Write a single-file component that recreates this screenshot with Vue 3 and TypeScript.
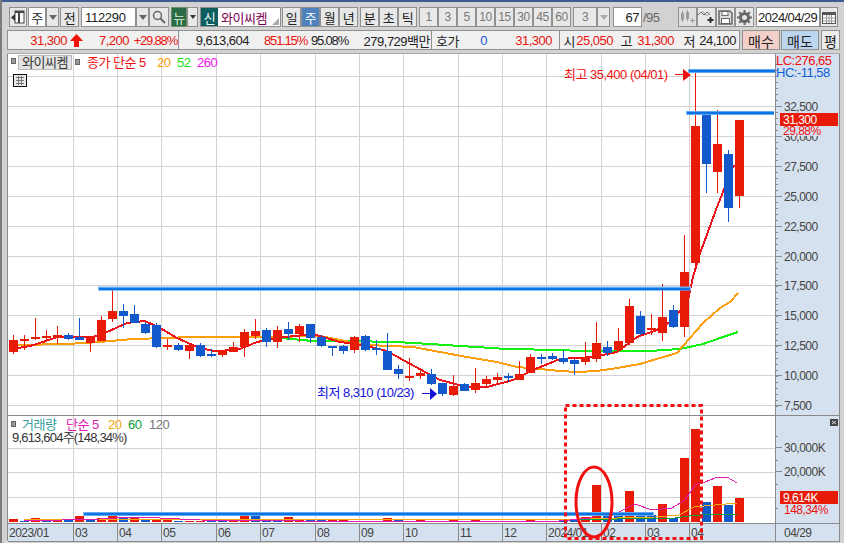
<script setup lang="ts">
type Candle = [number, number, number, number, 'r' | 'b']

// wick top, body top, body bottom, wick bottom (pixels in the chart)
const candles: Candle[] = [
  [335, 340, 352, 354, 'r'], [335, 339, 341, 350, 'r'], [318, 337, 339, 340, 'r'], [330, 336, 338, 342, 'r'],
  [326, 335, 338, 344, 'r'], [333, 335, 339, 340, 'b'], [318, 337, 340, 340, 'b'], [336, 337, 343, 352, 'r'],
  [316, 320, 341, 341, 'r'], [289, 311, 319, 322, 'r'], [304, 311, 316, 328, 'b'], [305, 314, 323, 323, 'b'],
  [322, 324, 333, 334, 'b'], [323, 325, 347, 348, 'b'], [339, 345, 347, 350, 'r'], [343, 345, 350, 351, 'b'],
  [344, 345, 351, 359, 'r'], [343, 345, 356, 357, 'b'], [349, 354, 356, 357, 'b'], [350, 350, 355, 357, 'r'],
  [342, 347, 352, 352, 'r'], [329, 332, 347, 357, 'r'], [319, 331, 336, 339, 'r'], [328, 330, 342, 347, 'b'],
  [326, 330, 342, 348, 'r'], [322, 329, 334, 340, 'b'], [324, 326, 334, 342, 'r'], [324, 324, 338, 343, 'b'],
  [335, 337, 346, 347, 'b'], [346, 346, 348, 356, 'b'], [345, 346, 351, 354, 'b'], [336, 337, 350, 353, 'r'],
  [335, 336, 350, 351, 'b'], [340, 348, 350, 355, 'b'], [333, 351, 370, 370, 'b'], [365, 369, 374, 379, 'b'],
  [358, 376, 378, 381, 'r'], [369, 373, 376, 379, 'r'], [369, 374, 384, 385, 'b'], [383, 383, 394, 396, 'b'],
  [375, 386, 395, 396, 'r'], [383, 384, 391, 391, 'b'], [368, 383, 390, 393, 'r'], [376, 379, 384, 388, 'r'],
  [373, 377, 380, 385, 'r'], [373, 376, 378, 382, 'b'], [361, 374, 380, 380, 'r'], [354, 357, 373, 373, 'r'],
  [354, 357, 359, 364, 'b'], [353, 356, 359, 360, 'b'], [350, 358, 362, 364, 'b'], [359, 360, 364, 375, 'b'],
  [342, 358, 362, 365, 'r'], [322, 343, 359, 362, 'r'], [341, 347, 353, 356, 'b'], [328, 341, 350, 352, 'r'],
  [299, 306, 343, 345, 'r'], [311, 316, 334, 335, 'b'], [314, 328, 330, 335, 'r'], [284, 317, 333, 341, 'r'],
  [305, 310, 327, 328, 'b'], [235, 272, 327, 337, 'r'], [71, 126, 263, 268, 'r'], [113, 113, 164, 193, 'b'],
  [110, 144, 172, 193, 'r'], [150, 154, 208, 222, 'b'], [120, 120, 196, 208, 'r']
]

// bar height, colour
const volumes: [number, 'r' | 'b'][] = [
  [3, 'r'], [1, 'b'], [4, 'r'], [2, 'b'], [3, 'r'], [2, 'b'], [6, 'r'], [2, 'b'], [4, 'r'], [6, 'r'],
  [4, 'b'], [4, 'r'], [2, 'b'], [3, 'r'], [2, 'r'], [1, 'b'], [1, 'r'], [1, 'r'], [1, 'b'], [1, 'b'],
  [2, 'r'], [6, 'r'], [7, 'b'], [3, 'b'], [3, 'b'], [5, 'r'], [3, 'r'], [2, 'b'], [2, 'b'], [2, 'r'],
  [2, 'r'], [1, 'r'], [1, 'b'], [1, 'b'], [4, 'r'], [2, 'b'], [1, 'r'], [2, 'r'], [1, 'b'], [1, 'b'],
  [2, 'r'], [1, 'b'], [2, 'r'], [1, 'r'], [1, 'r'], [1, 'b'], [1, 'r'], [2, 'r'], [1, 'b'], [1, 'b'],
  [2, 'b'], [2, 'b'], [5, 'r'], [37, 'r'], [7, 'b'], [9, 'b'], [31, 'r'], [9, 'b'], [7, 'b'], [18, 'r'],
  [4, 'b'], [64, 'r'], [93, 'r'], [20, 'b'], [36, 'r'], [17, 'b'], [24, 'r']
]

const barX = (i: number) => 9 + i * 11

const ma5 = '18,348 30,346 43,342 57,337 93,337 107,332 127,323 145,321 160,328 177,338 197,347 213,351 237,350 257,342 277,338 313,334 340,342 363,345 387,351 403,360 427,373 440,380 467,387 487,387 513,380 533,370 560,359 593,357 617,352 637,337 657,330 673,320 688,300 693,277 700,253 705,240 717,207 723,192 733,167 738,163'
const ma20 = '18,345 67,344 100,342 133,339 167,338 190,337 220,337 267,337 320,336 340,340 367,345 413,347 440,352 467,357 497,362 517,367 540,369 560,371 577,372 597,371 617,368 640,364 660,358 677,353 690,338 703,323 720,308 730,302 738,293'
const ma52 = '280,338 313,341 347,341 397,342 430,344 460,346 507,349 560,350 580,351 650,351 680,349 703,344 720,338 738,332'
const volMa5 = '24,521 100,519 130,517 160,518 200,520 300,521 400,521 560,521 590,518 601,513 619,512 635,504 652,510 672,508 685,500 695,485 705,482 715,478 727,477 737,483'
const volMa20 = '24,519 300,520 579,519 655,517 679,515 694,507 715,505 737,503'
const volMa60 = '300,519 560,520 675,518 689,516 712,514 737,514'

const priceTicks = [
  { y: 106, label: '32,500' }, { y: 136, label: '30,000' }, { y: 166, label: '27,500' }, { y: 196, label: '25,000' },
  { y: 226, label: '22,500' }, { y: 256, label: '20,000' }, { y: 285, label: '17,500' }, { y: 315, label: '15,000' },
  { y: 345, label: '12,500' }, { y: 375, label: '10,000' }, { y: 405, label: '7,500' }
]
const minorTicks = Array.from({ length: 58 }, (_, i) => 64 + i * 6)
const volMinor = [436, 460, 484, 508]

const months = [
  { x: 73, label: '03' }, { x: 117, label: '04' }, { x: 161, label: '05' }, { x: 216, label: '06' },
  { x: 260, label: '07' }, { x: 315, label: '08' }, { x: 359, label: '09' }, { x: 403, label: '10' },
  { x: 458, label: '11' }, { x: 502, label: '12' }, { x: 546, label: '2024/01' }, { x: 601, label: '02' },
  { x: 645, label: '03' }, { x: 689, label: '04' }
]

const periods = ['1', '3', '5', '10', '15', '30', '45', '60']

const quoteA = [
  { text: '9,613,604', w: 70, color: '' },
  { text: '851.15%', w: 58, color: 'up tight' },
  { text: '95.08%', w: 41, color: 'tight' },
  { text: '279,729백만', w: 82, color: '' }
]
const quoteB = [
  { text: '호가', w: 27, color: '' },
  { text: '0', w: 28, color: 'down' },
  { text: '31,300', w: 65, color: 'up' }
]
const quoteC = [
  { text: '시', w: 15, color: '' },
  { text: '25,050', w: 38, color: 'up' },
  { text: '고', w: 19, color: '' },
  { text: '31,300', w: 42, color: 'up' },
  { text: '저', w: 21, color: '' },
  { text: '24,100', w: 41, color: '' }
]
</script>

<template>
  <div class="hts">
    <div class="title-strip"></div>
    <div class="toolbar">
      <div class="group">
        <button class="btn btn--18">
          <svg width="14" height="14" viewBox="0 0 14 14"><rect x="4" y="1" width="9" height="12" fill="#fff" stroke="#444" /><rect x="7" y="1" width="2" height="12" fill="#444" /><rect x="4" y="1" width="9" height="2" fill="#444" /><path d="M4 4 0 7.500 4 11z" fill="#333" /></svg>
        </button>
        <div class="group group--join">
          <div class="field field--30">주</div>
          <button class="btn btn--drop"><i class="caret"></i></button>
        </div>
        <button class="btn btn--19">전</button>
      </div>
      <div class="group group--join">
        <div class="field field--code">112290</div>
        <button class="btn btn--drop"><i class="caret"></i></button>
        <button class="btn btn--20">
          <svg width="14" height="14" viewBox="0 0 14 14"><circle cx="5.500" cy="5.500" r="4" fill="none" stroke="#666" stroke-width="1.500" /><path d="M8.500 8.500 13 13" stroke="#666" stroke-width="2" /></svg>
        </button>
      </div>
      <div class="group group--join">
        <button class="btn btn--news">뉴</button>
        <button class="btn btn--narrow"><i class="caret caret--dark"></i></button>
      </div>
      <div class="name">
        <span class="name__tag">신</span>
        <span class="name__text">와이씨켐</span>
        <i class="name__corner"></i>
      </div>
      <div class="group group--period">
        <button class="btn btn--19">일</button>
        <button class="btn btn--19 btn--active">주</button>
        <button class="btn btn--19">월</button>
        <button class="btn btn--19">년</button>
      </div>
      <div class="group group--period">
        <button class="btn btn--19">분</button>
        <button class="btn btn--19">초</button>
        <button class="btn btn--19">틱</button>
      </div>
      <div class="group group--period">
        <button v-for="p in periods" :key="p" class="btn btn--19 btn--num">{{ p }}</button>
      </div>
      <div class="group group--join">
        <button class="btn btn--24 btn--num">3</button>
        <button class="btn btn--drop"><i class="caret caret--light"></i></button>
      </div>
      <div class="count">
        <div class="field field--count">67</div>
        <span class="count__total">/95</span>
      </div>
      <div class="group group--tools">
        <button class="btn btn--19 btn--faint">
          <svg width="16" height="14" viewBox="0 0 16 14" fill="#9c9c9c"><rect x="2" y="3" width="3" height="7" /><rect x="3" y="1" width="1" height="11" /><rect x="7" y="2" width="3" height="7" /><rect x="8" y="0" width="1" height="11" /><path d="M11 10h2V8h1v2h2v1h-2v2h-1v-2h-2z" /></svg>
        </button>
        <button class="btn btn--19">
          <svg width="16" height="14" viewBox="0 0 16 14" fill="none"><path d="M0 5 3 2l3 3 3-3 3 3" stroke="#666" /><path d="M4 1l5 5 3-4" stroke="#aaa" /><path d="M9.500 10h6M12.500 7v6" stroke="#333" stroke-width="2" /></svg>
        </button>
        <button class="btn btn--19">
          <svg width="15" height="15" viewBox="0 0 15 15"><path d="M1 1h11l2 2v11H1z" fill="#ddd" stroke="#666" stroke-width="1.500" /><rect x="4" y="1.500" width="6" height="4" fill="#fff" stroke="#666" /><rect x="3.500" y="8.500" width="8" height="5" fill="#fff" stroke="#666" /></svg>
        </button>
        <button class="btn btn--19">
          <svg width="15" height="15" viewBox="0 0 15 15"><circle cx="7.500" cy="7.500" r="4" fill="none" stroke="#666" stroke-width="3" /><path d="M7.500 0v15M0 7.500h15M2.200 2.200l10.600 10.600M12.800 2.200 2.200 12.800" stroke="#666" stroke-width="2" stroke-dasharray="2.500 10" /></svg>
        </button>
      </div>
      <div class="group group--join">
        <div class="field field--date">2024/04/29</div>
        <button class="btn btn--18">
          <svg width="14" height="13" viewBox="0 0 14 13"><rect x=".5" y="1.500" width="13" height="11" fill="#fff" stroke="#555" /><rect x="1" y="1" width="12" height="3" fill="#555" /><path d="M1 7h12M1 10h12M4.500 4v8M7 4v8M9.500 4v8" stroke="#999" /></svg>
        </button>
      </div>
    </div>

    <div class="quote-row">
      <div class="quote">
        <div class="quote__seg quote__seg--first">
          <span class="cell up cell--59">31,300</span>
          <svg class="quote__arrow" width="13" height="13" viewBox="0 0 13 13"><path d="M6.500 0 13 7H9v6H4V7H0z" fill="#f01208" /></svg>
          <span class="cell up cell--44">7,200</span>
          <span class="cell up tight cell--48">+29.88%</span>
        </div>
        <div class="quote__seg quote__seg--a">
          <span v-for="c in quoteA" :key="c.text" class="cell" :class="c.color" :style="{ width: c.w + 'px' }">{{ c.text }}</span>
        </div>
        <div class="quote__seg quote__seg--b">
          <span v-for="c in quoteB" :key="c.text" class="cell" :class="c.color" :style="{ width: c.w + 'px' }">{{ c.text }}</span>
        </div>
        <div class="quote__seg">
          <span v-for="(c, i) in quoteC" :key="i" class="cell" :class="c.color" :style="{ width: c.w + 'px' }">{{ c.text }}</span>
        </div>
      </div>
      <button class="order order--buy">매수</button>
      <button class="order order--sell">매도</button>
      <button class="order order--avg">평</button>
    </div>

    <svg class="chart" width="833" height="489" viewBox="7 53 833 489">
      <rect x="7" y="53" width="833" height="489" fill="#fff" />
      <rect x="775" y="53" width="65" height="488" fill="#d6e1ef" />
      <rect x="8" y="523" width="767" height="18" fill="#d6e1ef" />

      <!-- grid -->
      <g shape-rendering="crispEdges" stroke="#d2d2d2">
        <line v-for="m in months" :key="m.x" :x1="m.x + 0.5" :x2="m.x + 0.5" y1="53" y2="522" />
        <line x1="8" x2="775" y1="76.500" y2="76.500" />
        <line v-for="t in priceTicks" :key="t.y" x1="8" x2="775" :y1="t.y + 0.5" :y2="t.y + 0.5" />
        <line x1="8" x2="775" y1="448.500" y2="448.500" />
        <line x1="8" x2="775" y1="472.500" y2="472.500" />
        <line x1="8" x2="775" y1="497.500" y2="497.500" />
      </g>

      <!-- price moving averages -->
      <g fill="none" stroke-width="2" shape-rendering="crispEdges">
        <polyline :points="ma52" stroke="#12f012" />
        <polyline :points="ma20" stroke="#ff9e0c" />
        <polyline :points="ma5" stroke="#f0101a" />
      </g>

      <!-- candles -->
      <g shape-rendering="crispEdges">
        <g v-for="(c, i) in candles" :key="i" :class="c[4] === 'r' ? 'bar-up' : 'bar-down'">
          <rect :x="barX(i) + 4" :y="c[0]" width="1" :height="c[3] - c[0]" />
          <rect :x="barX(i)" :y="c[1]" width="9" :height="c[2] - c[1]" />
        </g>
      </g>

      <!-- volume -->
      <g shape-rendering="crispEdges">
        <rect v-for="(v, i) in volumes" :key="i" :class="v[1] === 'r' ? 'bar-up' : 'bar-down'" :x="barX(i)" :y="522 - v[0]" width="9" :height="v[0]" />
      </g>
      <g fill="none" shape-rendering="crispEdges">
        <polyline :points="volMa60" stroke="#0c9c3c" />
        <polyline :points="volMa20" stroke="#f5a90c" />
        <polyline :points="volMa5" stroke="#e01cb0" />
      </g>

      <!-- hand drawn trend lines -->
      <g fill="none">
        <line x1="98" x2="691" y1="288.500" y2="288.500" stroke="#7fbdf5" stroke-width="4" />
        <line x1="99" x2="690" y1="289" y2="289" stroke="#0a74e6" stroke-width="2.500" />
        <line x1="688" x2="775" y1="71" y2="71" stroke="#7fbdf5" stroke-width="4" />
        <line x1="689" x2="775" y1="71" y2="71" stroke="#0a74e6" stroke-width="2.500" />
        <line x1="686" x2="774" y1="113" y2="113" stroke="#7fbdf5" stroke-width="4" />
        <line x1="687" x2="774" y1="113" y2="113" stroke="#0a74e6" stroke-width="2.500" />
        <line x1="83" x2="654" y1="514" y2="514" stroke="#7fbdf5" stroke-width="4" />
        <line x1="84" x2="653" y1="514" y2="514" stroke="#0a74e6" stroke-width="2.500" />
      </g>

      <!-- legends -->
      <rect class="dot" x="11.500" y="58.500" width="4" height="5" />
      <rect class="chip" x="18.500" y="55.500" width="53" height="14" />
      <text class="t-kr" x="22" y="66.500" fill="#333">와이씨켐</text>
      <rect class="dot" x="75.500" y="59.500" width="4" height="5" />
      <text class="t-kr" x="87" y="66.500" fill="#f01010">종가 단순 5</text>
      <text class="t-kr" x="157" y="66.500" fill="#ff9a00">20</text>
      <text class="t-kr" x="177" y="66.500" fill="#12e012">52</text>
      <text class="t-kr" x="197" y="66.500" fill="#f012f0">260</text>
      <g shape-rendering="crispEdges">
        <rect x="13.500" y="74.500" width="13" height="12" fill="#e8e8e8" stroke="#111" />
        <path d="M16 77h8M16 80h8M16 83h8M18.500 76v9M21.500 76v9" stroke="#777" fill="none" />
      </g>

      <text class="t-kr" x="564" y="79" fill="#f01010">최고 35,400 (04/01)</text>
      <path d="M675 74.500h8" stroke="#f01010" />
      <path d="M683 69 691 75 683 81z" fill="#f01010" />
      <text class="t-kr" x="317" y="397" fill="#1010d8">최저 8,310 (10/23)</text>
      <path d="M422 393.500h8" stroke="#1010d8" />
      <path d="M430 388 437 394 430 400z" fill="#1010d8" />

      <rect class="dot" x="11.500" y="421.500" width="4" height="5" />
      <text class="t-kr" x="22" y="429" fill="#2f9c9c">거래량</text>
      <text class="t-kr" x="66" y="429" fill="#e01cb0">단순 5</text>
      <text class="t-kr" x="108" y="429" fill="#f5a90c">20</text>
      <text class="t-kr" x="128" y="429" fill="#0c9c3c">60</text>
      <text class="t-kr" x="149" y="429" fill="#777">120</text>
      <text class="t-kr t-kr--tight" x="12" y="442" fill="#333">9,613,604주(148,34%)</text>

      <!-- axes -->
      <g shape-rendering="crispEdges" stroke="#8a8a8a">
        <line x1="775.500" x2="775.500" y1="53" y2="541" />
        <line x1="8" x2="840" y1="415.500" y2="415.500" />
        <line x1="8" x2="840" y1="523.500" y2="523.500" />
        <line x1="8" x2="840" y1="541.500" y2="541.500" />
        <line x1="7.500" x2="7.500" y1="53" y2="541" />
        <line x1="839.500" x2="839.500" y1="53" y2="541" />
        <line x1="7" x2="840" y1="53.500" y2="53.500" stroke="#aaa" />
        <line v-for="m in months" :key="m.x" :x1="m.x + 0.5" :x2="m.x + 0.5" y1="523" y2="541" />
        <line v-for="y in minorTicks" :key="y" x1="775" x2="778" :y1="y + 0.5" :y2="y + 0.5" />
        <line v-for="t in priceTicks" :key="t.y" x1="775" x2="782" :y1="t.y + 0.5" :y2="t.y + 0.5" />
        <line v-for="y in volMinor" :key="y" x1="775" x2="778" :y1="y + 0.5" :y2="y + 0.5" />
        <line x1="775" x2="782" y1="447.500" y2="447.500" />
        <line x1="775" x2="782" y1="471.500" y2="471.500" />
      </g>

      <text class="t-kr" x="776" y="65" fill="#f01010">LC:276,65</text>
      <text class="t-kr" x="776" y="77" fill="#0a5fd8">HC:-11,58</text>

      <text v-for="t in priceTicks" :key="t.label" class="t-axis" x="784" :y="t.y + 4.5">{{ t.label }}</text>
      <rect class="bar-up" x="780" y="113" width="58" height="13" />
      <text class="t-axis t-axis--white" x="783" y="124">31,300</text>
      <rect x="783" y="127" width="45" height="9" fill="#d6e1ef" />
      <text class="t-axis t-axis--red" x="783" y="135">29,88%</text>

      <text class="t-axis" x="784" y="452">30,000K</text>
      <text class="t-axis" x="784" y="476">20,000K</text>
      <rect class="bar-up" x="780" y="491" width="58" height="13" />
      <text class="t-axis t-axis--white" x="783" y="502">9,614K</text>
      <text class="t-axis t-axis--red" x="784" y="514">148,34%</text>
      <rect x="830" y="419" width="8" height="7" fill="#444" />
      <path d="M832 421l4 3M836 421l-4 3" stroke="#ddd" />

      <text class="t-axis" x="9" y="537">2023/01</text>
      <text v-for="m in months" :key="m.x" class="t-axis" :x="m.x + 2" y="537">{{ m.label }}</text>
      <text class="t-axis" x="784" y="537">04/29</text>

      <!-- annotation -->
      <rect x="565.500" y="405.500" width="136" height="133" fill="none" stroke="#f01010" stroke-width="3" stroke-dasharray="4 3" />
      <ellipse cx="594" cy="502" rx="18" ry="35" fill="none" stroke="#f01010" stroke-width="3" />
    </svg>
  </div>
</template>

<style>
html,
body {
  margin: 0;
  background: #e6e6e6;
}
</style>

<style scoped>
.hts {
  width: 844px;
  height: 543px;
  box-sizing: border-box;
  overflow: hidden;
  background: #d2d2d2;
  border-left: 2px solid #7c7c7c;
  font-family: "Liberation Sans", "Noto Sans CJK KR", sans-serif;
  font-size: 13px;
  letter-spacing: -0.5px;
  color: #222;
  display: flex;
  flex-direction: column;
}

.title-strip {
  height: 2px;
  margin-left: -2px;
  background: #3f5b94;
  flex: none;
}

.toolbar {
  display: flex;
  gap: 2px;
  height: 20px;
  margin: 5px 2px 0 7px;
  flex: none;
}

.group {
  display: flex;
  gap: 1px;
}

.group--join {
  gap: 0;
}

.group--period {
  gap: 0;
}

.group--tools {
  gap: 0;
  margin-left: 16px;
}

.btn,
.field {
  box-sizing: border-box;
  height: 20px;
  border: 1px solid #909090;
  padding: 0;
  font: inherit;
  letter-spacing: inherit;
  color: #222;
  display: flex;
  align-items: center;
  justify-content: center;
  flex: none;
}

.btn {
  background: #e8e8e8;
}

.field {
  background: #fff;
}

.btn--18 { width: 18px; }
.btn--19 { width: 19px; }
.btn--20 { width: 20px; }
.btn--24 { width: 24px; }
.btn--drop { width: 13px; }
.btn--narrow { width: 11px; }
.btn--num { color: #777; font-size: 12px; }
.btn--faint { background: #dfdfdf; }

.btn--active {
  background: #4f81bd;
  color: #fff;
}

.btn--news {
  width: 16px;
  background: #2a6b45;
  color: #d8f0d8;
  border-color: #6e8c6e;
}

.field--30 { width: 18px; }
.field--code { width: 55px; justify-content: flex-start; padding-left: 3px; letter-spacing: -0.3px; }
.field--count { width: 29px; justify-content: flex-end; padding-right: 2px; }
.field--date { width: 64px; letter-spacing: -0.6px; }

.caret {
  width: 0;
  height: 0;
  border-left: 4px solid transparent;
  border-right: 4px solid transparent;
  border-top: 5px solid #666;
}

.caret--dark { border-top-color: #333; border-left-width: 3px; border-right-width: 3px; border-top-width: 4px; }
.caret--light { border-top-color: #aaa; }

.name {
  position: relative;
  box-sizing: border-box;
  width: 81px;
  height: 20px;
  background: #fff;
  border: 1px solid #909090;
  display: flex;
  align-items: center;
  margin-right: -1px;
}

.name__tag {
  width: 17px;
  height: 18px;
  background: #0d5f5f;
  color: #e8f8f8;
  display: flex;
  align-items: center;
  justify-content: center;
}

.name__text {
  margin-left: 3px;
  color: #7a0050;
}

.name__corner {
  position: absolute;
  right: 1px;
  bottom: 1px;
  border-left: 7px solid transparent;
  border-bottom: 7px solid #aaa;
}

.count {
  display: flex;
  align-items: center;
  margin-left: 1px;
}

.count__total {
  margin-left: 1px;
  color: #666;
}

.quote-row {
  display: flex;
  height: 20px;
  margin: 3px 2px 3px 5px;
  flex: none;
}

.quote {
  box-sizing: border-box;
  width: 733px;
  border: 1px solid #909090;
  background: #f0f0f0;
  display: flex;
  align-items: center;
  white-space: nowrap;
}

.quote__seg {
  height: 100%;
  display: flex;
  align-items: center;
  flex: none;
}

.quote__seg--first {
  width: 170px;
  border-right: 1px solid #909090;
}

.quote__seg--a {
  width: 252px;
  border-right: 1px solid #909090;
}

.quote__seg--b {
  width: 127px;
  border-right: 1px solid #909090;
}

.quote__arrow {
  margin-left: 3px;
  flex: none;
}

.cell {
  display: block;
  text-align: right;
  flex: none;
}

.cell--59 { width: 59px; }
.cell--44 { width: 46px; }
.cell--48 { width: 48px; }

.up { color: #e8140c; }
.down { color: #1259cc; }
.tight { letter-spacing: -1.2px; }

.order {
  box-sizing: border-box;
  height: 20px;
  padding: 0;
  border: 1px solid #909090;
  font: inherit;
  font-size: 14px;
  color: #222;
  flex: none;
}

.order--buy { width: 38px; margin-left: 2px; background: #f2cfc8; }
.order--sell { width: 38px; margin-left: 1px; background: #bcd6f0; }
.order--avg { width: 19px; margin-left: 2px; background: #ececec; }

.chart {
  display: block;
  margin-left: 5px;
  flex: none;
}

.bar-up { fill: #e81a08; }
.bar-down { fill: #1259cc; }

.chip {
  fill: #e4e4e4;
  stroke: #bbb;
}

.dot {
  fill: #999;
  stroke: #666;
}

.t-kr {
  font-family: "Liberation Sans", "Noto Sans CJK KR", sans-serif;
  font-size: 13px;
  letter-spacing: -0.5px;
}

.t-kr--tight { letter-spacing: -0.8px; }

.t-axis {
  font-family: "Liberation Sans", "Noto Sans CJK KR", sans-serif;
  font-size: 12px;
  letter-spacing: -0.5px;
  fill: #444;
}

.t-axis--white { fill: #fff; }
.t-axis--red { fill: #f01010; }
</style>
